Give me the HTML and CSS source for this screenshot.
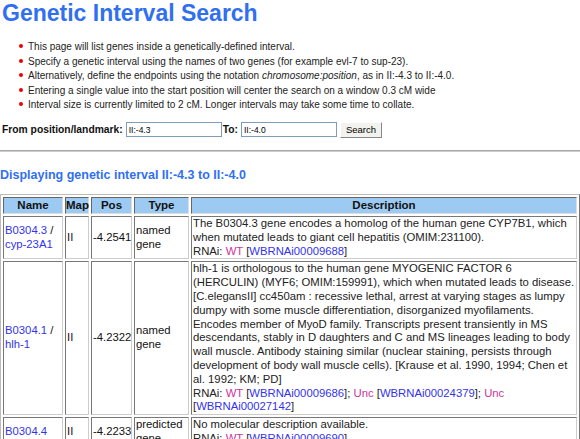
FILE: index.html
```html
<!DOCTYPE html>
<html lang="en">
	<head>
		<meta charset="utf-8">
		<title>Genetic Interval Search</title>
		<link rel="stylesheet" href="styles.css">
	</head>
	<body>

		<h1 class="page-title">Genetic Interval Search</h1>

		<ul class="notes">
			<li>This page will list genes inside a genetically-defined interval.</li>
			<li>Specify a genetic interval using the names of two genes (for example evl-7 to sup-23).</li>
			<li>Alternatively, define the endpoints using the notation <i>chromosome:position</i>, as in II:-4.3 to II:-4.0.</li>
			<li>Entering a single value into the start position will center the search on a window 0.3 cM wide</li>
			<li>Interval size is currently limited to 2 cM. Longer intervals may take some time to collate.</li>
		</ul>

		<form class="search" action="#">
			<label for="from">From position/landmark:</label>
			<input type="text" id="from" name="from" value="II:-4.3">
			<label for="to">To:</label>
			<input type="text" id="to" name="to" value="II:-4.0">
			<button type="submit">Search</button>
		</form>

		<hr class="rule">

		<h3 class="result-title">Displaying genetic interval II:-4.3 to II:-4.0</h3>

		<table class="genes">
			<tr>
				<th class="c-name">Name</th>
				<th class="c-map">Map</th>
				<th class="c-pos">Pos</th>
				<th class="c-type">Type</th>
				<th>Description</th>
			</tr>
			<tr>
				<td><a href="#">B0304.3</a> / <a href="#">cyp-23A1</a></td>
				<td>II</td>
				<td>-4.2541</td>
				<td>named gene</td>
				<td class="desc">The B0304.3 gene encodes a homolog of the human gene CYP7B1, which when mutated leads to giant cell hepatitis (OMIM:231100).<br>
					RNAi: <a class="pheno" href="#">WT</a> [<a href="#">WBRNAi00009688</a>]</td>
			</tr>
			<tr>
				<td><a href="#">B0304.1</a> / <a href="#">hlh-1</a></td>
				<td>II</td>
				<td>-4.2322</td>
				<td>named gene</td>
				<td class="desc">hlh-1 is orthologous to the human gene MYOGENIC FACTOR 6 (HERCULIN) (MYF6; OMIM:159991), which when mutated leads to disease. [C.elegansII] cc450am : recessive lethal, arrest at varying stages as lumpy dumpy with some muscle differentiation, disorganized myofilaments. Encodes member of MyoD family. Transcripts present transiently in MS descendants, stably in D daughters and C and MS lineages leading to body wall muscle. Antibody staining similar (nuclear staining, persists through development of body wall muscle cells). [Krause et al. 1990, 1994; Chen et al. 1992; KM; PD]<br>
					RNAi: <a class="pheno" href="#">WT</a> [<a href="#">WBRNAi00009686</a>]; <a class="pheno" href="#">Unc</a> [<a href="#">WBRNAi00024379</a>]; <a class="pheno" href="#">Unc</a> [<a href="#">WBRNAi00027142</a>]</td>
			</tr>
			<tr>
				<td><a href="#">B0304.4</a></td>
				<td>II</td>
				<td>-4.2233</td>
				<td>predicted gene</td>
				<td class="desc">No molecular description available.<br>
					RNAi: <a class="pheno" href="#">WT</a> [<a href="#">WBRNAi00009690</a>]</td>
			</tr>
		</table>

	</body>
</html>
```

FILE: styles.css
```css
body {
	margin: 0;
	background: #fff;
	color: #111;
	font-family: "Liberation Sans", Arial, sans-serif;
}

a {
	color: #3333ee;
	text-decoration: none;
}

.page-title {
	margin: 0;
	padding: 0 0 0 2px;
	font-size: 23px;
	line-height: 26px;
	color: #3070f0;
}

.notes {
	margin: 14px 0 0 0;
	padding: 0 0 0 28px;
	list-style: none;
	font-size: 10px;
	line-height: 14.6px;
	color: #222;
}

.notes li::before {
	content: "";
	display: inline-block;
	width: 4px;
	height: 4px;
	margin: 0 5px 0 -9px;
	border-radius: 50%;
	background: #e00;
	vertical-align: 2px;
}

.search {
	display: flex;
	align-items: center;
	margin: 9px 0 0 0;
	padding-left: 2px;
	font-size: 10.3px;
	font-weight: bold;
}

.search label {
	margin-right: 3px;
}

.search input {
	width: 96px;
	height: 15px;
	box-sizing: border-box;
	border: 1px solid #7f9db9;
	padding: 0 2px;
	font-family: "Liberation Sans", Arial, sans-serif;
	font-size: 8.5px;
	margin-right: 1px;
}

.search button {
	width: 42px;
	height: 16px;
	margin-left: 2px;
	padding: 0;
	border: 1px solid;
	border-color: #fff #888 #888 #fff;
	background: #f2f2ee;
	font-family: "Liberation Sans", Arial, sans-serif;
	font-size: 9.5px;
}

.rule {
	margin: 12px 0 0 0;
	border: 0;
	border-top: 1px solid #aaa;
	border-bottom: 1px solid #ccc;
}

.result-title {
	margin: 15px 0 0 0;
	font-size: 12.5px;
	line-height: 16px;
	color: #3070f0;
}

.genes {
	width: 580px;
	margin-top: 11px;
	table-layout: fixed;
	border: 1px solid;
	border-color: #bbb #777 #777 #bbb;
	border-spacing: 2px;
	font-size: 11.3px;
	line-height: 13.8px;
}

.genes th {
	background: #9ccaf2;
	border: 1px solid;
	border-color: #666 #ddd #ddd #666;
	padding: 0;
	font-size: 11.5px;
	line-height: 15px;
}

.genes td {
	border: 1px solid;
	border-color: #777 #ccc #ccc #777;
	padding: 0 0 0 1px;
	vertical-align: middle;
}

.c-name { width: 58px; }
.c-map { width: 22px; }
.c-pos { width: 39px; }
.c-type { width: 53px; }

.genes .desc {
	color: #222;
}

.genes a.pheno {
	color: #cc3399;
}
```
